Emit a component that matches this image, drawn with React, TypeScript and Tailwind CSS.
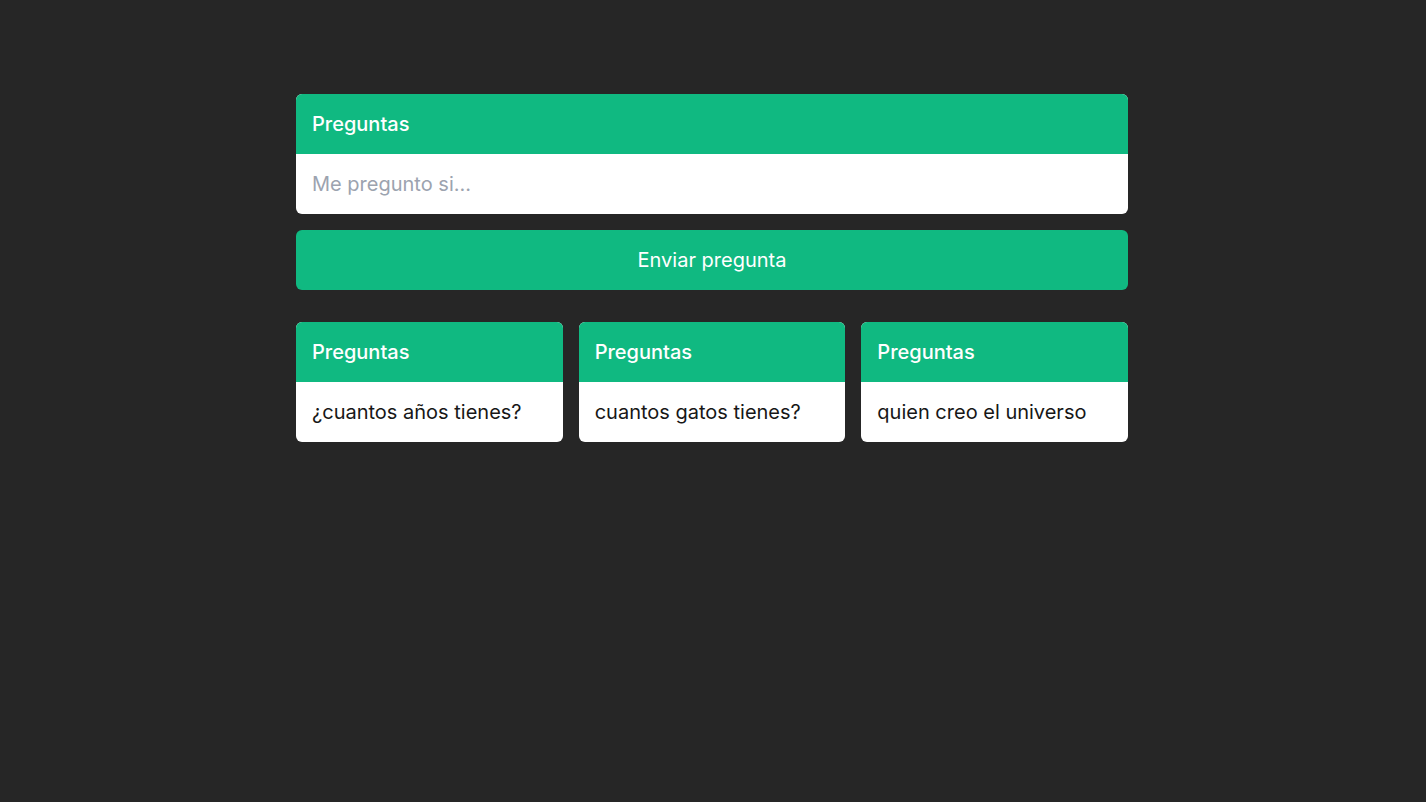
import { useState } from "react";

const preguntas = [
  "¿cuantos años tienes?",
  "cuantos gatos tienes?",
  "quien creo el universo",
];

function Card({ title, children }: { title: string; children: React.ReactNode }) {
  return (
    <div className="overflow-hidden rounded-md bg-white">
      <div className="bg-[#10b981] px-4 py-4 text-xl font-medium leading-7 text-white">
        {title}
      </div>
      {children}
    </div>
  );
}

export default function App() {
  const [text, setText] = useState("");

  return (
    <div
      className="min-h-[802px] bg-[#262626] pr-[2px] pt-[94px]"
      style={{ fontFamily: "Inter, 'Noto Sans', sans-serif" }}
    >
      <div className="mx-auto flex w-[832px] flex-col">
        <Card title="Preguntas">
          <input
            type="text"
            value={text}
            onChange={(e) => setText(e.target.value)}
            placeholder="Me pregunto si..."
            className="block w-full px-4 py-4 text-xl leading-7 text-[#171717] outline-none placeholder:text-[#9ca3af]"
          />
        </Card>

        <button
          type="button"
          className="mt-4 rounded-md bg-[#10b981] py-4 text-xl leading-7 text-white"
        >
          Enviar pregunta
        </button>

        <div className="mt-8 grid grid-cols-3 gap-4">
          {preguntas.map((p) => (
            <Card key={p} title="Preguntas">
              <p className="px-4 py-4 text-xl leading-7 text-[#171717]">{p}</p>
            </Card>
          ))}
        </div>
      </div>
    </div>
  );
}
